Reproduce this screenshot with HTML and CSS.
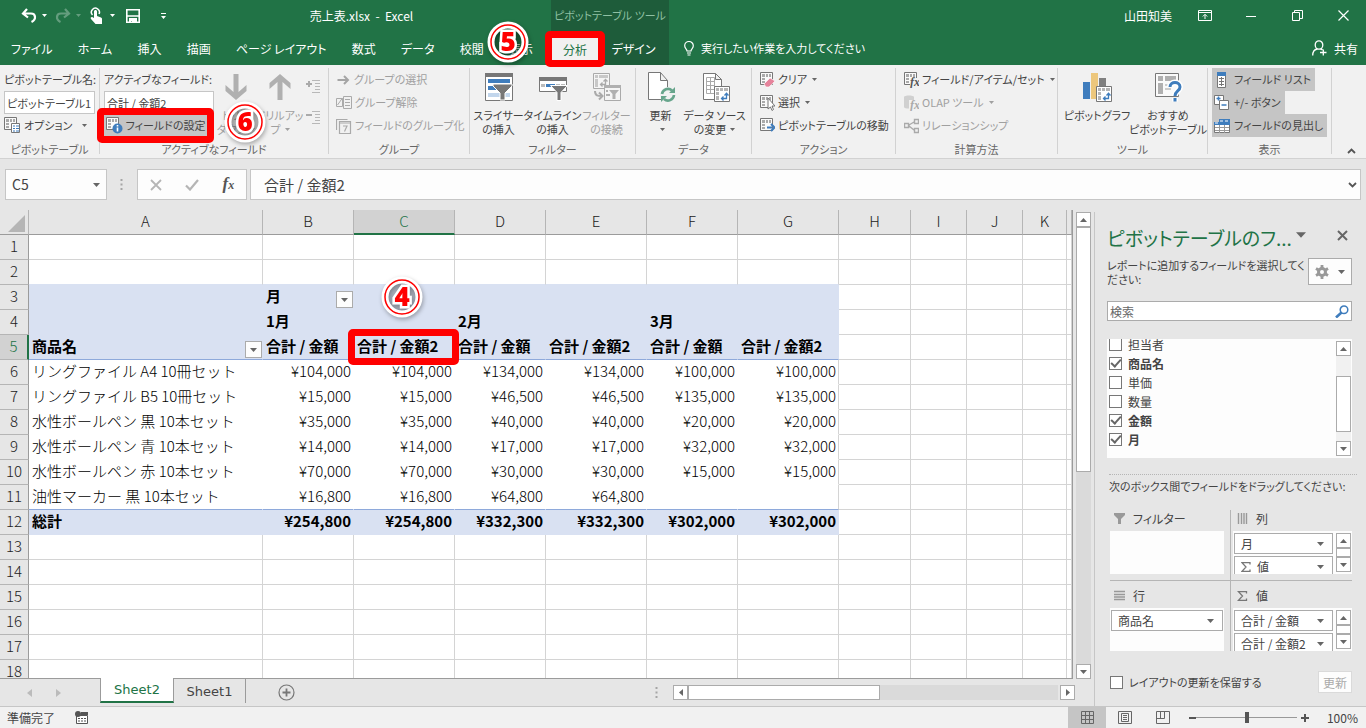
FILE: index.html
```html
<!DOCTYPE html>
<html lang="ja">
<head>
    <meta charset="UTF-8">
    <meta name="viewport" content="width=device-width, initial-scale=1.0">
    <title>売上表.xlsx - Excel</title>
    <link rel="stylesheet" href="styles.css">
</head>
<body>
    <!-- Shared icon shapes -->
    <svg class="defs" width="0" height="0" aria-hidden="true">
        <symbol id="pivot" viewBox="0 0 16 16">
            <path d="M.5 .5h12v12H.5z" fill="#fafafa" stroke="#777"/>
            <path d="M2 2h3v3H2zM6 2h2v3H6zM9 2h2v3H9zM2 6h3v2H2zM2 9h3v2H2z" fill="#aaa"/>
        </symbol>
        <symbol id="minipivot" viewBox="0 0 16 16">
            <path d="M.5 .5h15v15H.5z" fill="#fff" stroke="#777"/>
            <path d="M2 2h3v3H2zM6 2h3v3H6zM10 2h4v3h-4zM2 6h3v3H2zM2 10h3v4H2z" fill="#b5b5b5"/>
            <path d="M8 12.500h4.500V7.500M10.500 9.500l2-2.200 2 2.200M9.500 10.500L7.500 12.500l2 2" fill="none" stroke="#3f7dbd" stroke-width="1.300"/>
        </symbol>
        <symbol id="caret" viewBox="0 0 7 4"><path d="M0 0h7L3.500 4z" fill="currentColor"/></symbol>
        <symbol id="sigma" viewBox="0 0 10 10"><path d="M9 2.500V.7H1L5 5 1 9.300h8V7.500" fill="none" stroke="#777" stroke-width="1.300"/></symbol>
    </svg>

    <header class="titlebar">
        <div class="quick-access">
            <button class="qat" aria-label="元に戻す"><svg width="16" height="16" viewBox="0 0 16 16"><path d="M6 1L2 5.500l5 4M2.500 5.500H10c5 0 5.500 6 .5 8.500" fill="none" stroke="#fff" stroke-width="2.200"/></svg><svg class="caret" width="5" height="3"><use href="#caret"/></svg></button>
            <button class="qat faded" aria-label="やり直し"><svg width="16" height="16" viewBox="0 0 16 16"><path d="M10 1l4 4.500-5 4M13.500 5.500H6c-5 0-5.500 6-.5 8.500" fill="none" stroke="#fff" stroke-width="2.200"/></svg><svg class="caret" width="5" height="3"><use href="#caret"/></svg></button>
            <button class="qat" aria-label="タッチ/マウス モード"><svg width="16" height="17" viewBox="0 0 16 17"><path d="M3.500 8A4 4 0 1 1 10 7" fill="none" stroke="#fff" stroke-width="1.500"/><path d="M5 4.500c0-2 3-2 3 0V9l4 1.500c1 .5 1 1 1 2V17H6.500L2 12c-1-1.500.5-2.500 2-1.500L5 11z" fill="#fff"/></svg><svg class="caret" width="5" height="3"><use href="#caret"/></svg></button>
            <button class="qat save" aria-label="上書き保存"><svg width="14" height="14" viewBox="0 0 14 14"><path d="M.8 .8h12.400v12.400H.8zM1 7h12" fill="none" stroke="#fff" stroke-width="1.600"/><path d="M3 9h8v5H6v-2H5v2H3z" fill="#fff"/></svg></button>
            <button class="qat more" aria-label="ユーザー設定"><svg width="5" height="6" viewBox="0 0 5 6"><path d="M0 0h5v1H0zM0 3h5L2.500 6z" fill="#fff"/></svg></button>
        </div>
        <div class="doc-title">売上表.xlsx&nbsp; - &nbsp;Excel</div>
        <div class="context-title">ピボットテーブル ツール</div>
        <div class="user">山田知美</div>
        <div class="window-buttons">
            <button aria-label="リボンの表示オプション"><svg width="14" height="12" viewBox="0 0 14 12"><path d="M.5 .5h13v10H.5zM1 2.500h12M7 9V4.500M4.800 6.500L7 4.300l2.200 2.200" fill="none" stroke="#fff"/></svg></button>
            <button aria-label="最小化"><svg width="10" height="10" viewBox="0 0 10 10"><path d="M0 5.500h10" stroke="#fff"/></svg></button>
            <button aria-label="元に戻す (縮小)"><svg width="11" height="11" viewBox="0 0 11 11"><path d="M.5 2.500h7v8h-7zM2.500 2.500v-2h8v8h-3" fill="none" stroke="#fff"/></svg></button>
            <button aria-label="閉じる"><svg width="11" height="11" viewBox="0 0 11 11"><path d="M.5 .5l10 10M10.500 .5l-10 10" stroke="#fff" stroke-width="1.200"/></svg></button>
        </div>
    </header>

    <nav class="tabs">
        <div class="main-tabs">
            <button>ファイル</button>
            <button>ホーム</button>
            <button>挿入</button>
            <button>描画</button>
            <button>ページ レイアウト</button>
            <button>数式</button>
            <button>データ</button>
            <button>校閲</button>
            <button>表示</button>
        </div>
        <div class="context-tabs">
            <div class="marked">
                <button class="active-tab">分析</button>
                <svg class="badge badge-tab" width="44" height="44" viewBox="0 0 44 44"><use href="#ring"/><text class="badge-number" x="22" y="31">5</text></svg>
            </div>
            <button class="design-tab">デザイン</button>
        </div>
        <button class="tell-me"><svg width="10" height="15" viewBox="0 0 10 15"><path d="M3 10C3 8 .7 7.500 .7 4.800a4.300 4.300 0 0 1 8.600 0C9.300 7.500 7 8 7 10zM3 12h4M3.500 14h3" fill="none" stroke="#fff" stroke-width="1.200"/></svg>実行したい作業を入力してください</button>
        <button class="share"><svg width="15" height="16" viewBox="0 0 15 16"><path d="M7 .8a3.800 4.200 0 1 1 0 8.400 3.800 4.200 0 0 1 0-8.400zM.7 15.500c0-4 2-6 4.500-6.500M8.500 9c1 .2 1.500 .5 2 1M8 12.500h6.500M11.300 9.500v6" fill="none" stroke="#fff" stroke-width="1.300"/></svg>共有</button>
    </nav>

    <section class="ribbon">
        <div class="group group-name">
            <div class="group-body stack">
                <label class="row" for="pivotName">ピボットテーブル名:</label>
                <input class="ribbon-input" type="text" id="pivotName" value="ピボットテーブル1">
                <button class="row"><svg width="17" height="17" viewBox="0 0 17 17"><use href="#pivot" width="16" height="16"/><path d="M7.500 6.500h8v9h-8z" fill="#fff" stroke="#777"/><path d="M9 9h2M12 9h3M9 11.500h2M12 11.500h3M9 14h2M12 14h3" stroke="#3f7dbd"/></svg>オプション<svg class="caret push" width="5" height="3"><use href="#caret"/></svg></button>
            </div>
            <div class="group-label">ピボットテーブル</div>
        </div>

        <div class="group group-field">
            <div class="group-body">
                <div class="stack field-stack">
                    <label class="row" for="activeField">アクティブなフィールド:</label>
                    <input class="ribbon-input" type="text" id="activeField" value="合計 / 金額2">
                    <div class="marked">
                        <button class="row settings"><svg width="17" height="17" viewBox="0 0 17 17"><use href="#pivot" width="16" height="16"/><circle cx="11.500" cy="11.500" r="5" fill="#3f7dbd"/><path d="M11.500 8v1.600M11.500 10.500v4" stroke="#fff" stroke-width="1.600"/></svg>フィールドの設定</button>
                        <svg class="badge badge-settings" width="44" height="44" viewBox="0 0 44 44"><use href="#ring"/><text class="badge-number" x="22" y="31">6</text></svg>
                    </div>
                </div>
                <button class="big drill disabled"><svg width="22" height="30" viewBox="0 0 22 30"><path d="M8.500 2h5v18l8-7v6L11 28 .5 19v-6l8 7z" fill="#b0b0b0"/></svg><span>ドリル<br>ダウン<svg class="caret" width="5" height="3"><use href="#caret"/></svg></span></button>
                <button class="big drill disabled"><svg width="22" height="30" viewBox="0 0 22 30"><path d="M8.500 28h5V10l8 7v-6L11 2 .5 11v6l8-7z" fill="#b0b0b0"/></svg><span>ドリルアッ<br>プ<svg class="caret" width="5" height="3"><use href="#caret"/></svg></span></button>
                <div class="expand">
                    <button aria-label="フィールドの展開"><svg width="15" height="15" viewBox="0 0 15 15"><path d="M0 5h6M3 2v6" stroke="#aaa" stroke-width="2"/><path d="M6 1.500h8M9 4.500h5M9 7.500h5M9 10.500h5M6 13.500h8" stroke="#b8b8b8"/></svg></button>
                    <button aria-label="フィールドの折りたたみ"><svg width="15" height="15" viewBox="0 0 15 15"><path d="M0 5h6" stroke="#aaa" stroke-width="2"/><path d="M6 1.500h8M9 4.500h5M9 7.500h5M9 10.500h5M6 13.500h8" stroke="#b8b8b8"/></svg></button>
                </div>
            </div>
            <div class="group-label">アクティブなフィールド</div>
        </div>

        <div class="group group-grouping">
            <div class="group-body stack disabled">
                <button class="row"><svg width="15" height="16" viewBox="0 0 15 16"><path d="M1.500 8h10M8 4l4 4-4 4" fill="none" stroke="#a5a5a5" stroke-width="2"/></svg>グループの選択</button>
                <button class="row"><svg width="16" height="16" viewBox="0 0 16 16"><path d="M.5 3.500h6v8h-6zM7.500 1.500h8v12h-8zM1.500 10l5-7M9 4.500h5M9 7.500h5M9 10.500h5" fill="none" stroke="#aaa"/></svg>グループ解除</button>
                <button class="row"><svg width="16" height="16" viewBox="0 0 16 16"><path d="M.5 12V1.500h11M3.500 3.500h11v12h-11zM3.500 5h11M7 8h4l-2.500 5.500" fill="none" stroke="#aaa" stroke-width="1.200"/></svg>フィールドのグループ化</button>
            </div>
            <div class="group-label">グループ</div>
        </div>

        <div class="group group-filter">
            <div class="group-body centered">
                <button class="big"><svg width="30" height="30" viewBox="0 0 30 30"><path d="M1.500 1.500h27v27h-27z" fill="#fff" stroke="#777"/><path d="M1 1h28v4H1z" fill="#777"/><path d="M4 7h22v4H4zM4 14h9v4H4z" fill="#3f7dbd"/><path d="M4 21h22v4H4z" fill="#c2d6ec"/><path d="M9 12h19v2l-7 7v7h-5v-7l-7-7z" fill="#777" stroke="#fff"/></svg><span>スライサー<br>の挿入</span></button>
                <button class="big"><svg width="30" height="30" viewBox="0 0 30 30"><path d="M1.500 5.500h27v14h-27z" fill="#fff" stroke="#777"/><path d="M1 5h28v4H1z" fill="#777"/><path d="M3 12h4v3H3zM18 12h4v3h-4zM23 12h4v3h-4z" fill="#bbb"/><path d="M8 12h9v3H8z" fill="#3f7dbd"/><path d="M12.500 13.500h17l-6.500 7v8h-4v-8z" fill="#777" stroke="#fff"/></svg><span>タイムライン<br>の挿入</span></button>
                <button class="big disabled"><svg width="30" height="30" viewBox="0 0 30 30"><path d="M1.500 1.500h16v15h-16z" fill="#f5f5f5" stroke="#aaa"/><path d="M3 3h3v3H3zM7 3h9v3H7zM3 7h3v8H3z" fill="#c8c8c8"/><path d="M9 12.500h4.500V8M11.500 9.500l2-2 2 2M10.500 10.500l-2 2 2 2" fill="none" stroke="#aaa" stroke-width="1.300"/><path d="M3 19c0 5 3 5 7 5M7 20.500l3.500 3.500L7 27.500" fill="none" stroke="#aaa" stroke-width="2"/><path d="M12.500 13.500h16v15h-16z" fill="#f5f5f5" stroke="#aaa"/><path d="M12 13h17v3H12zM17 18h10l-3.500 4v5h-3v-5zM14 18h2v2h-2zM14 22h4v2h-4z" fill="#b0b0b0"/></svg><span>フィルター<br>の接続</span></button>
            </div>
            <div class="group-label">フィルター</div>
        </div>

        <div class="group group-data">
            <div class="group-body centered">
                <button class="big"><svg width="30" height="30" viewBox="0 0 30 30"><path d="M2.500 .5h12l7 8v19h-19zM14.500 .5v8h7" fill="#fff" stroke="#777"/><circle cx="22" cy="23" r="8" fill="#f1f1f1"/><path d="M16 22a6 6 0 0 1 10-3.500M28 23a6 6 0 0 1-10 4" fill="none" stroke="#67a58c" stroke-width="2.600"/><path d="M29 15v6h-6zM15 30v-6h6z" fill="#67a58c"/></svg><span>更新<br><svg class="caret" width="5" height="3"><use href="#caret"/></svg></span></button>
                <button class="big"><svg width="30" height="30" viewBox="0 0 30 30"><path d="M3.500 1.500h12l6 6v20h-18zM15.500 1.500v6h6" fill="#fff" stroke="#777"/><path d="M6.500 5.500h8v16h-8zM6.500 9.500h8M6.500 13.500h8M6.500 17.500h8M10.500 5.500v16" fill="none" stroke="#aaa"/><use href="#minipivot" x="14" y="14" width="16" height="16"/></svg><span>データ ソース<br>の変更<svg class="caret" width="5" height="3"><use href="#caret"/></svg></span></button>
            </div>
            <div class="group-label">データ</div>
        </div>

        <div class="group group-action">
            <div class="group-body stack">
                <button class="row"><svg width="15" height="16" viewBox="0 0 15 16"><use href="#pivot" width="16" height="16"/><path d="M4 12l6-6 5 3-6 6H6z" fill="#e5839b" stroke="#fff" stroke-width=".6"/></svg>クリア<svg class="caret" width="5" height="3"><use href="#caret"/></svg></button>
                <button class="row"><svg width="15" height="16" viewBox="0 0 15 16"><use href="#pivot" width="16" height="16"/><path d="M8 3v11l2.500-2 1.500 3.500 1.500-1L12 11h3z" fill="#fff" stroke="#777"/></svg>選択<svg class="caret" width="5" height="3"><use href="#caret"/></svg></button>
                <button class="row"><svg width="15" height="16" viewBox="0 0 15 16"><use href="#pivot" width="16" height="16"/><path d="M7 9.500h5M11 6l3.500 3.500L11 13" fill="none" stroke="#3f7dbd" stroke-width="2"/></svg>ピボットテーブルの移動</button>
            </div>
            <div class="group-label">アクション</div>
        </div>

        <div class="group group-calc">
            <div class="group-body stack">
                <button class="row"><svg width="15" height="16" viewBox="0 0 15 16"><use href="#pivot" width="16" height="16"/><path d="M6 6h9v10H6z" fill="#f1f1f1"/><text class="fx-small" x="6" y="14">fx</text></svg>フィールド/アイテム/セット<svg class="caret" width="5" height="3"><use href="#caret"/></svg></button>
                <button class="row disabled"><svg width="15" height="16" viewBox="0 0 15 16"><path d="M0 2c0-2 10-2 10 0v10c0 2-10 2-10 0z" fill="#d0d0d0"/><path d="M5 5h10v11H5z" fill="#f1f1f1"/><text class="fx-small faint" x="6" y="14">fx</text></svg>OLAP ツール<svg class="caret" width="5" height="3"><use href="#caret"/></svg></button>
                <button class="row disabled"><svg width="15" height="16" viewBox="0 0 15 16"><path d="M.5 5.500h4v4h-4zM10.500 1.500h4v4h-4zM10.500 10.500h4v4h-4zM5 7l5-3M5 8l5 4" fill="none" stroke="#aaa" stroke-width="1.400"/></svg>リレーションシップ</button>
            </div>
            <div class="group-label">計算方法</div>
        </div>

        <div class="group group-tools">
            <div class="group-body centered">
                <button class="big"><svg width="30" height="30" viewBox="0 0 30 30"><path d="M1 10h7v17H1z" fill="#3f7dbd"/><path d="M9 1h7v26H9z" fill="#edc77c"/><path d="M17 6h7v10h-7z" fill="#808080"/><use href="#minipivot" x="14" y="14" width="16" height="16"/></svg><span>ピボットグラフ</span></button>
                <button class="big"><svg width="30" height="30" viewBox="0 0 30 30"><path d="M2.500 1.500h23v23h-23z" fill="#fafafa" stroke="#777"/><path d="M5 4h5v5H5zM12 4h11v5H12zM5 11h5v11H5z" fill="#b0b0b0"/><path d="M12 12h6v2h-6zM12 16h6v2h-6z" fill="#ccc"/><path d="M17 15c0-6 10-6 10 0 0 4-5 4-5 9M22 26v3.500" fill="none" stroke="#fff" stroke-width="6"/><path d="M17 15c0-6 10-6 10 0 0 4-5 4-5 9M22 26v3.500" fill="none" stroke="#3f7dbd" stroke-width="3"/></svg><span>おすすめ<br>ピボットテーブル</span></button>
            </div>
            <div class="group-label">ツール</div>
        </div>

        <div class="group group-show">
            <div class="group-body stack">
                <button class="row pressed"><svg width="16" height="16" viewBox="0 0 16 16"><path d="M3.500 .5h8v15h-8z" fill="#fff" stroke="#777"/><path d="M3 0h9v4H3z" fill="#3f7dbd"/><path d="M5 6.500h5M5 9.500h5M5 12.500h5M7.500 5v9" stroke="#777"/></svg>フィールド リスト</button>
                <button class="row pressed"><svg width="16" height="16" viewBox="0 0 16 16"><path d="M.5 .5h9v9h-9z" fill="#fff" stroke="#777"/><path d="M5.500 5.500h9v9h-9z" fill="#fff" stroke="#777"/><path d="M2.500 3.500h4M4.500 1.500v4M7.500 10h5" stroke="#3f7dbd" stroke-width="1.500"/></svg>+/- ボタン</button>
                <button class="row pressed"><svg width="16" height="16" viewBox="0 0 16 16"><path d="M.5 5.500h15v9H.5z" fill="#fff" stroke="#777"/><path d="M5 1h11v4H5zM0 4h16v3H0z" fill="#3f7dbd"/><path d="M1 9.500h14M1 12.500h14M5.500 7v8M10.500 7v8" stroke="#999"/><path d="M1 5h3M6 3h3M11 3h3" stroke="#fff"/></svg>フィールドの見出し</button>
            </div>
            <div class="group-label">表示</div>
        </div>
        <button class="collapse" aria-label="リボンを折りたたむ"><svg width="9" height="6" viewBox="0 0 9 6"><path d="M1 5l3.500-3.500L8 5" fill="none" stroke="#555" stroke-width="1.800"/></svg></button>
    </section>

    <section class="formula-bar">
        <div class="name-box">
            <input type="text" value="C5" aria-label="名前ボックス">
            <svg class="caret" width="7" height="4"><use href="#caret"/></svg>
        </div>
        <svg class="grip" width="3" height="12" viewBox="0 0 3 12"><path d="M1.500 0v12" stroke="#a5a5a5" stroke-width="2" stroke-dasharray="2 2.500"/></svg>
        <div class="formula-buttons">
            <button aria-label="キャンセル"><svg width="12" height="12" viewBox="0 0 12 12"><path d="M1 1l10 10M11 1L1 11" stroke="#b5b5b5" stroke-width="1.800"/></svg></button>
            <button aria-label="入力"><svg width="14" height="12" viewBox="0 0 14 12"><path d="M1 6.500l4 4L13 1" fill="none" stroke="#b5b5b5" stroke-width="2.200"/></svg></button>
            <button class="fx" aria-label="関数の挿入">f<small>x</small></button>
        </div>
        <div class="formula">
            <input type="text" value="合計 / 金額2" aria-label="数式バー">
            <svg width="9" height="6" viewBox="0 0 9 6"><path d="M1 1l3.500 3.500L8 1" fill="none" stroke="#555" stroke-width="1.800"/></svg>
        </div>
    </section>

    <main class="workspace">
        <div class="book">
            <div class="sheet-area">
                <div class="sheet">
                    <table>
                        <colgroup>
                            <col class="c-head"><col class="c-a"><col class="c-s"><col class="c-w"><col class="c-s"><col class="c-w"><col class="c-s"><col class="c-w"><col class="c-h"><col class="c-i"><col class="c-i"><col class="c-k"><col>
                        </colgroup>
                        <thead>
                            <tr><th class="corner"><svg width="17" height="17" viewBox="0 0 17 17"><path d="M17 0v17H0z" fill="#b5b5b5"/></svg></th><th>A</th><th>B</th><th class="selected">C</th><th>D</th><th>E</th><th>F</th><th>G</th><th>H</th><th>I</th><th>J</th><th>K</th><th></th></tr>
                        </thead>
                        <tbody>
                            <tr><th>1</th><td></td><td></td><td></td><td></td><td></td><td></td><td></td><td></td><td></td><td></td><td></td><td></td></tr>
                            <tr class="above"><th>2</th><td></td><td></td><td></td><td></td><td></td><td></td><td></td><td></td><td></td><td></td><td></td><td></td></tr>
                            <tr class="band"><th>3</th><td></td><td>月<button class="filter" aria-label="月のフィルター"><svg class="caret" width="7" height="4"><use href="#caret"/></svg></button></td><td></td><td></td><td></td><td></td><td></td><td></td><td></td><td></td><td></td><td></td></tr>
                            <tr class="band"><th>4</th><td></td><td>1月</td><td></td><td>2月</td><td></td><td>3月</td><td></td><td></td><td></td><td></td><td></td><td></td></tr>
                            <tr class="band ruled"><th class="selected">5</th><td>商品名<button class="filter" aria-label="商品名のフィルター"><svg class="caret" width="7" height="4"><use href="#caret"/></svg></button></td><td>合計 / 金額</td><td class="marked">合計 / 金額2<svg class="badge badge-cell" width="44" height="44" viewBox="0 0 44 44"><use href="#ring"/><text class="badge-number" x="22" y="31">4</text></svg></td><td>合計 / 金額</td><td>合計 / 金額2</td><td>合計 / 金額</td><td>合計 / 金額2</td><td></td><td></td><td></td><td></td><td></td></tr>
                            <tr class="item"><th>6</th><td>リングファイル A4 10冊セット</td><td>¥104,000</td><td>¥104,000</td><td>¥134,000</td><td>¥134,000</td><td>¥100,000</td><td>¥100,000</td><td></td><td></td><td></td><td></td><td></td></tr>
                            <tr class="item"><th>7</th><td>リングファイル B5 10冊セット</td><td>¥15,000</td><td>¥15,000</td><td>¥46,500</td><td>¥46,500</td><td>¥135,000</td><td>¥135,000</td><td></td><td></td><td></td><td></td><td></td></tr>
                            <tr class="item"><th>8</th><td>水性ボールペン 黒 10本セット</td><td>¥35,000</td><td>¥35,000</td><td>¥40,000</td><td>¥40,000</td><td>¥20,000</td><td>¥20,000</td><td></td><td></td><td></td><td></td><td></td></tr>
                            <tr class="item"><th>9</th><td>水性ボールペン 青 10本セット</td><td>¥14,000</td><td>¥14,000</td><td>¥17,000</td><td>¥17,000</td><td>¥32,000</td><td>¥32,000</td><td></td><td></td><td></td><td></td><td></td></tr>
                            <tr class="item"><th>10</th><td>水性ボールペン 赤 10本セット</td><td>¥70,000</td><td>¥70,000</td><td>¥30,000</td><td>¥30,000</td><td>¥15,000</td><td>¥15,000</td><td></td><td></td><td></td><td></td><td></td></tr>
                            <tr class="item ruled"><th>11</th><td>油性マーカー 黒 10本セット</td><td>¥16,800</td><td>¥16,800</td><td>¥64,800</td><td>¥64,800</td><td></td><td></td><td></td><td></td><td></td><td></td><td></td></tr>
                            <tr class="band total"><th>12</th><td>総計</td><td>¥254,800</td><td>¥254,800</td><td>¥332,300</td><td>¥332,300</td><td>¥302,000</td><td>¥302,000</td><td></td><td></td><td></td><td></td><td></td></tr>
                            <tr><th>13</th><td></td><td></td><td></td><td></td><td></td><td></td><td></td><td></td><td></td><td></td><td></td><td></td></tr>
                            <tr><th>14</th><td></td><td></td><td></td><td></td><td></td><td></td><td></td><td></td><td></td><td></td><td></td><td></td></tr>
                            <tr><th>15</th><td></td><td></td><td></td><td></td><td></td><td></td><td></td><td></td><td></td><td></td><td></td><td></td></tr>
                            <tr><th>16</th><td></td><td></td><td></td><td></td><td></td><td></td><td></td><td></td><td></td><td></td><td></td><td></td></tr>
                            <tr><th>17</th><td></td><td></td><td></td><td></td><td></td><td></td><td></td><td></td><td></td><td></td><td></td><td></td></tr>
                            <tr><th>18</th><td></td><td></td><td></td><td></td><td></td><td></td><td></td><td></td><td></td><td></td><td></td><td></td></tr>
                        </tbody>
                    </table>
                </div>
                <div class="vscroll">
                    <button class="up" aria-label="上へ"><svg class="caret" width="7" height="4"><use href="#caret"/></svg></button>
                    <div class="track"><div class="thumb"></div></div>
                    <button aria-label="下へ"><svg class="caret" width="7" height="4"><use href="#caret"/></svg></button>
                </div>
            </div>
            <div class="sheet-tabs">
                <div class="tab-arrows">
                    <svg width="5" height="8" viewBox="0 0 5 8"><path d="M5 0v8L0 4z" fill="#bbb"/></svg>
                    <svg width="5" height="8" viewBox="0 0 5 8"><path d="M0 0v8l5-4z" fill="#bbb"/></svg>
                </div>
                <button class="sheet-tab current">Sheet2</button>
                <button class="sheet-tab">Sheet1</button>
                <button class="add-sheet" aria-label="新しいシート"><svg width="17" height="17" viewBox="0 0 17 17"><circle cx="8.500" cy="8.500" r="7.500" fill="none" stroke="#777" stroke-width="1.200"/><path d="M8.500 4.500v8M4.500 8.500h8" stroke="#777" stroke-width="1.800"/></svg></button>
                <svg class="grip" width="3" height="11" viewBox="0 0 3 11"><path d="M1.500 0v11" stroke="#a5a5a5" stroke-width="2" stroke-dasharray="2 2.500"/></svg>
                <div class="hscroll">
                    <button aria-label="左へ"><svg width="4" height="7" viewBox="0 0 4 7"><path d="M4 0v7L0 3.500z" fill="#666"/></svg></button>
                    <div class="track"><div class="thumb"></div></div>
                    <button aria-label="右へ"><svg width="4" height="7" viewBox="0 0 4 7"><path d="M0 0v7l4-3.500z" fill="#666"/></svg></button>
                </div>
            </div>
        </div>

        <aside class="pane">
            <div class="pane-head">
                <h2>ピボットテーブルのフ...</h2>
                <svg class="caret" width="10" height="6"><use href="#caret"/></svg>
                <button class="pane-close" aria-label="閉じる"><svg width="11" height="11" viewBox="0 0 11 11"><path d="M1 1l9 9M10 1l-9 9" stroke="#666" stroke-width="2"/></svg></button>
            </div>
            <div class="pane-intro">
                <p>レポートに追加するフィールドを選択してく<br>ださい:</p>
                <button class="gear" aria-label="ツール"><svg width="14" height="14" viewBox="0 0 14 14"><circle cx="7" cy="7" r="3.500" fill="none" stroke="#999" stroke-width="3"/><path d="M7 0v3M7 11v3M1 3.500l2.500 1.500M10.500 9l2.500 1.500M1 10.500L3.500 9M10.500 5L13 3.500" stroke="#999" stroke-width="2.800"/></svg><svg class="caret" width="7" height="4"><use href="#caret"/></svg></button>
            </div>
            <div class="search">
                <input type="text" placeholder="検索" aria-label="検索">
                <svg width="14" height="13" viewBox="0 0 14 13"><circle cx="9" cy="4.800" r="3.800" fill="none" stroke="#3f7dbd" stroke-width="1.500"/><path d="M6.500 7.500L1 12.500" stroke="#3f7dbd" stroke-width="2.600"/></svg>
            </div>
            <div class="field-list">
                <div class="fields">
                    <label><input type="checkbox">担当者</label>
                    <label class="on"><input type="checkbox" checked>商品名</label>
                    <label><input type="checkbox">単価</label>
                    <label><input type="checkbox">数量</label>
                    <label class="on"><input type="checkbox" checked>金額</label>
                    <label class="on"><input type="checkbox" checked>月</label>
                </div>
                <div class="vscroll list-scroll">
                    <button class="up" aria-label="上へ"><svg class="caret" width="7" height="4"><use href="#caret"/></svg></button>
                    <div class="track"><div class="thumb"></div></div>
                    <button aria-label="下へ"><svg class="caret" width="7" height="4"><use href="#caret"/></svg></button>
                </div>
            </div>
            <p class="drag-hint">次のボックス間でフィールドをドラッグしてください:</p>
            <div class="areas">
                <div class="area">
                    <h3><svg width="11" height="11" viewBox="0 0 11 11"><path d="M0 0h11v2L7 6v5H4V6L0 2z" fill="#999"/></svg>フィルター</h3>
                    <div class="drop"></div>
                </div>
                <div class="area">
                    <h3><svg width="11" height="11" viewBox="0 0 11 11"><path d="M1.500 0v11M4.500 0v11M7 0v11M9.500 0v11" stroke="#999" stroke-width="1.400"/></svg>列</h3>
                    <div class="drop">
                        <div class="pills">
                            <button class="pill">月<svg class="caret" width="7" height="4"><use href="#caret"/></svg></button>
                            <button class="pill"><svg width="10" height="10"><use href="#sigma"/></svg>値<svg class="caret" width="7" height="4"><use href="#caret"/></svg></button>
                        </div>
                        <div class="vscroll drop-scroll">
                            <button class="up" aria-label="上へ"><svg class="caret" width="7" height="4"><use href="#caret"/></svg></button>
                            <div class="track"><div class="thumb"></div></div>
                            <button aria-label="下へ"><svg class="caret" width="7" height="4"><use href="#caret"/></svg></button>
                        </div>
                    </div>
                </div>
                <div class="area">
                    <h3><svg width="11" height="11" viewBox="0 0 11 11"><path d="M0 1.500h11M0 4.500h11M0 7h11M0 9.500h11" stroke="#999" stroke-width="1.400"/></svg>行</h3>
                    <div class="drop">
                        <div class="pills">
                            <button class="pill">商品名<svg class="caret" width="7" height="4"><use href="#caret"/></svg></button>
                        </div>
                    </div>
                </div>
                <div class="area">
                    <h3><svg width="11" height="10"><use href="#sigma"/></svg>値</h3>
                    <div class="drop">
                        <div class="pills">
                            <button class="pill">合計 / 金額<svg class="caret" width="7" height="4"><use href="#caret"/></svg></button>
                            <button class="pill">合計 / 金額2<svg class="caret" width="7" height="4"><use href="#caret"/></svg></button>
                        </div>
                        <div class="vscroll drop-scroll">
                            <button class="up" aria-label="上へ"><svg class="caret" width="7" height="4"><use href="#caret"/></svg></button>
                            <div class="track"><div class="thumb"></div></div>
                            <button aria-label="下へ"><svg class="caret" width="7" height="4"><use href="#caret"/></svg></button>
                        </div>
                    </div>
                </div>
            </div>
            <div class="pane-foot">
                <label><input type="checkbox">レイアウトの更新を保留する</label>
                <button class="update" disabled>更新</button>
            </div>
        </aside>
    </main>

    <footer class="status">
        <span>準備完了</span>
        <button class="macro" aria-label="マクロの記録"><svg width="14" height="14" viewBox="0 0 14 14"><path d="M1.500 4.500h11v8h-11z" fill="#fff" stroke="#555"/><path d="M6 1h7v3H6z" fill="#555"/><circle cx="3" cy="3" r="3" fill="#555"/><path d="M3 7.500h8M3 10h8" stroke="#555" stroke-dasharray="2 1"/></svg></button>
        <div class="views">
            <button class="view pressed" aria-label="標準"><svg width="13" height="13" viewBox="0 0 13 13"><path d="M.5 .5h12v12H.5zM.5 4.500h12M.5 8.500h12M4.500 .5v12M8.500 .5v12" fill="none" stroke="#666"/></svg></button>
            <button class="view" aria-label="ページ レイアウト"><svg width="14" height="13" viewBox="0 0 14 13"><path d="M.5 .5h13v12H.5zM3.500 2.500h7v8h-7zM5 4.500h4M5 6.500h4M5 8.500h4" fill="none" stroke="#666"/></svg></button>
            <button class="view" aria-label="改ページ プレビュー"><svg width="14" height="13" viewBox="0 0 14 13"><path d="M.5 .5h13v12H.5zM4.500 .5v7M8.500 .5v7M.5 7.500h8" fill="none" stroke="#666"/></svg></button>
        </div>
        <div class="zoom">
            <button aria-label="縮小"><svg width="7" height="8" viewBox="0 0 7 8"><path d="M0 4h7" stroke="#555" stroke-width="2"/></svg></button>
            <input type="range" min="0" max="200" value="100" aria-label="ズーム">
            <button aria-label="拡大"><svg width="8" height="8" viewBox="0 0 8 8"><path d="M0 4h8M4 0v8" stroke="#555" stroke-width="2"/></svg></button>
            <span>100%</span>
        </div>
    </footer>

    <!-- Ring behind the step numbers -->
    <svg class="defs" width="0" height="0" aria-hidden="true">
        <symbol id="ring" viewBox="0 0 44 44">
            <circle cx="22" cy="22" r="14" fill="#000" fill-opacity=".18"/>
            <circle cx="22" cy="22" r="17" fill="none" stroke="#fff" stroke-width="7"/>
            <circle cx="22" cy="22" r="17" fill="none" stroke="#f00" stroke-width="1.500"/>
        </symbol>
    </svg>
</body>
</html>
```

FILE: styles.css
```css
* {
    box-sizing: border-box;
}

body {
    margin: 0;
    height: 100vh;
    display: flex;
    flex-direction: column;
    overflow: hidden;
    font-family: "Noto Sans CJK JP", sans-serif;
    font-size: 12px;
    line-height: 15px;
    font-feature-settings: "palt";
    color: #444;
    background-color: #e6e6e6;
}

button, input {
    font: inherit;
    font-feature-settings: inherit;
    color: inherit;
    margin: 0;
    padding: 0;
    border: none;
    background: none;
}

button {
    display: flex;
    align-items: center;
    justify-content: center;
    white-space: nowrap;
}

h2, h3, p {
    margin: 0;
    font-weight: normal;
}

svg {
    flex: none;
}

.defs {
    position: absolute;
}

.caret {
    color: #666;
}

/* Title bar */
.titlebar {
    display: flex;
    align-items: center;
    flex: none;
    height: 31px;
    background-color: #217346;
    color: #fff;
}

.quick-access {
    display: flex;
    align-items: center;
    width: 172px;
    padding-left: 21px;
}

.qat {
    flex: none;
    width: 34px;
    gap: 5px;
    justify-content: flex-start;
}

.qat .caret {
    color: #fff;
}

.faded {
    opacity: 0.3;
}

.save {
    width: 38px;
    padding-left: 3px;
}

.more {
    width: 8px;
}

.doc-title {
    width: 379px;
    text-align: center;
    font-feature-settings: normal;
}

.context-title {
    width: 118px;
    font-size: 11px;
    line-height: 31px;
    text-align: center;
    white-space: nowrap;
    background-color: #1e5c3a;
    color: #8fc0a3;
}

.user {
    margin-left: auto;
    padding-right: 10px;
}

.window-buttons {
    display: flex;
}

.window-buttons button {
    width: 46px;
    height: 31px;
}

/* Tabs */
.tabs {
    display: flex;
    flex: none;
    height: 34px;
    background-color: #217346;
    color: #fff;
}

.main-tabs {
    display: flex;
    justify-content: space-between;
    width: 551px;
    padding: 0 18px 0 11px;
}

.context-tabs {
    display: flex;
    width: 118px;
    padding-left: 1px;
    background-color: #1e5c3a;
}

.marked {
    position: relative;
}

/* Red frame round the thing to click */
.marked::after {
    content: "";
    position: absolute;
    z-index: 2;
    inset: -7px;
    border: 7px solid #f00;
    border-radius: 5px;
    pointer-events: none;
}

.context-tabs .marked {
    width: 46px;
    height: 22px;
    margin-top: 7px;
}

.active-tab {
    width: 100%;
    height: 100%;
    background-color: #f1f1f1;
    color: #217346;
}

.design-tab {
    flex: 1;
}

.tell-me {
    gap: 7px;
    margin-left: 15px;
    font-size: 11px;
}

.share {
    gap: 7px;
    margin-left: auto;
    padding-right: 8px;
}

.badge {
    position: absolute;
    z-index: 3;
    filter: drop-shadow(1px 2px 2px rgba(0, 0, 0, 0.3));
}

.badge-number {
    font-family: "Open Sans", sans-serif;
    font-size: 26px;
    font-weight: 800;
    text-anchor: middle;
    fill: #f00;
    stroke: #fff;
    stroke-width: 5px;
    paint-order: stroke;
}

.badge-tab {
    left: -66px;
    top: -18px;
}

.badge-settings {
    right: -60px;
    top: -14px;
}

.badge-cell {
    left: 26px;
    top: -60px;
}

/* Ribbon */
.ribbon {
    display: flex;
    flex: none;
    height: 94px;
    padding-top: 3px;
    font-size: 11px;
    background-color: #f1f1f1;
    border-bottom: 1px solid #d2d2d2;
}

.group {
    display: flex;
    flex-direction: column;
    flex: none;
    border-right: 1px solid #d2d2d2;
    margin-bottom: 4px;
}

.group-body {
    display: flex;
    flex: none;
    height: 72px;
}

.group-label {
    line-height: 18px;
    text-align: center;
    color: #666;
}

.stack {
    display: flex;
    flex-direction: column;
    align-items: flex-start;
}

.centered {
    justify-content: center;
}

.row {
    display: flex;
    align-items: center;
    height: 23px;
    gap: 3px;
    white-space: nowrap;
}

.row .caret {
    margin-left: 2px;
}

.row .push {
    margin-left: 7px;
}

.ribbon-input {
    width: 100%;
    height: 23px;
    padding-left: 2px;
    background-color: #fff;
    border: 1px solid #c6c6c6;
}

.big {
    flex-direction: column;
    justify-content: flex-start;
    padding-top: 4px;
    gap: 6px;
    line-height: 14px;
}

.big span {
    text-align: center;
}

.big span .caret {
    margin-left: 4px;
    vertical-align: 3px;
}

.disabled, .disabled .caret {
    color: #a0a0a0;
}

.group-name {
    width: 100px;
}

.group-name .group-body {
    padding: 0 4px;
}

.group-field {
    width: 229px;
}

.group-field .group-body {
    padding-left: 4px;
}

.field-stack {
    flex: none;
    width: 110px;
    height: 72px;
}

.settings {
    width: 103px;
    height: 21px;
    margin-top: 1px;
    background-color: #c5c5c5;
}

.field-stack .marked::after {
    top: -6px;
}

.drill {
    width: 44px;
}

.expand {
    display: flex;
    flex-direction: column;
    gap: 16px;
    padding: 11px 0 0 4px;
}

.group-grouping {
    width: 141px;
}

.group-grouping .group-body {
    padding-left: 7px;
}

.group-filter {
    width: 166px;
}

.group-filter .big {
    width: 54px;
}

.group-data {
    width: 116px;
}

.group-data .big:first-child {
    width: 42px;
}

.group-data .big:last-child {
    width: 66px;
}

.group-action {
    width: 144px;
}

.group-action .group-body {
    padding-left: 8px;
}

.group-calc {
    width: 162px;
}

.group-calc .group-body {
    padding-left: 8px;
}

.fx-small {
    font-family: "Liberation Serif", serif;
    font-size: 12px;
    font-style: italic;
    font-weight: bold;
    fill: #555;
}

.faint {
    fill: #aaa;
}

.group-tools {
    width: 150px;
}

.group-tools .big {
    width: 71px;
}

.group-show {
    width: 124px;
}

.group-show .group-body {
    padding-left: 4px;
}

.pressed {
    background-color: #c5c5c5;
}

.group-show .row {
    gap: 4px;
    padding: 0 4px 0 2px;
}

.collapse {
    margin: auto 10px 4px auto;
}

/* Formula bar */
.formula-bar {
    display: flex;
    align-items: center;
    flex: none;
    height: 51px;
    padding: 0 5px;
}

.name-box, .formula-buttons, .formula {
    display: flex;
    align-items: center;
    height: 31px;
    background-color: #fdfdfd;
    border: 1px solid #c6c6c6;
}

.name-box {
    width: 102px;
    padding: 0 6px;
    font-size: 14px;
}

.name-box input {
    flex: 1;
    min-width: 0;
}

.formula-bar .grip {
    margin: 0 14px 0 13px;
}

.formula-buttons {
    width: 110px;
    justify-content: space-around;
    color: #555;
}

.fx {
    font-family: "Liberation Serif", serif;
    font-size: 17px;
    font-style: italic;
    font-weight: bold;
    align-items: baseline;
}

.fx small {
    font-size: 12px;
}

.formula {
    flex: 1;
    margin-left: 3px;
    padding: 0 3px 0 13px;
    font-size: 15px;
    font-feature-settings: normal;
}

.formula input {
    flex: 1;
}

/* Sheet */
.workspace {
    display: flex;
    flex: 1;
    min-height: 0;
}

.book {
    display: flex;
    flex-direction: column;
    flex: 1;
    min-width: 0;
}

.sheet-area {
    display: flex;
    flex: 1;
    min-height: 0;
}

.sheet {
    flex: 1;
    min-width: 0;
    overflow: hidden;
    border-right: 1px solid #9b9b9b;
    border-bottom: 1px solid #9b9b9b;
}

table {
    width: 100%;
    table-layout: fixed;
    border-collapse: separate;
    border-spacing: 0;
    font-size: 15px;
    font-weight: 300;
    line-height: 22px;
    font-feature-settings: normal;
    color: #000;
}

.c-head { width: 29px; }
.c-a { width: 234px; }
.c-s { width: 91px; }
.c-w { width: 101px; }
.c-h { width: 72px; }
.c-i { width: 56px; }
.c-k { width: 44px; }

th {
    height: 25px;
    padding: 0 0 2px;
    font-weight: inherit;
    color: #222;
    background-color: #e6e6e6;
    border-right: 1px solid #b5b5b5;
    border-bottom: 1px solid #9b9b9b;
}

tbody th {
    border-right-color: #9b9b9b;
    border-bottom-color: #b5b5b5;
}

th.selected {
    color: #217346;
    background-color: #d2d2d2;
}

thead .selected {
    padding-bottom: 1px;
    border-bottom: 2px solid #217346;
}

tbody .selected {
    border-right: 2px solid #217346;
}

.corner svg {
    display: block;
    margin: 4px 3px 0 auto;
}

td {
    position: relative;
    height: 25px;
    padding: 0 2px 2px 3px;
    white-space: nowrap;
    background-color: #fff;
    border-right: 1px solid #d4d4d4;
    border-bottom: 1px solid #d4d4d4;
}

.above td:nth-child(-n+8) {
    border-bottom-color: #d9e1f2;
}

.band td:nth-child(-n+8) {
    font-weight: bold;
    background-color: #d9e1f2;
    border-color: #d9e1f2;
}

.item td:nth-child(-n+8) {
    border-color: #fff;
}

.item td:nth-child(8) {
    border-right-color: #d4d4d4;
}

.band.ruled td:nth-child(-n+8), .item.ruled td:nth-child(-n+8) {
    border-bottom-color: #8ea9db;
}

.item td:nth-child(n+3), .total td:nth-child(n+3) {
    text-align: right;
}

td.marked::after {
    inset: -6px -5px -6px -6px;
}

.filter {
    position: absolute;
    right: 0;
    bottom: 1px;
    width: 17px;
    height: 17px;
    background-color: #fdfdfd;
    border: 1px solid #ababab;
}

/* Scrollbars */
.vscroll {
    display: flex;
    flex-direction: column;
    flex: none;
    width: 15px;
    margin: 2px 3px 0;
    background-color: #dadada;
}

.vscroll button, .hscroll button {
    flex: none;
    width: 15px;
    height: 15px;
    background-color: #fff;
    border: 1px solid #ababab;
}

.up .caret {
    transform: rotate(180deg);
}

.track {
    flex: 1;
    min-height: 0;
}

.thumb {
    background-color: #fff;
    border: 1px solid #ababab;
}

.vscroll .thumb {
    height: 56%;
}

.sheet-tabs {
    display: flex;
    align-items: center;
    flex: none;
    height: 27px;
}

.tab-arrows {
    display: flex;
    gap: 24px;
    width: 100px;
    padding-left: 27px;
}

.sheet-tab {
    align-self: flex-start;
    width: 72px;
    height: 24px;
    font-family: "DejaVu Sans", sans-serif;
    font-size: 13px;
    border-right: 1px solid #9b9b9b;
}

.current {
    width: 74px;
    margin-top: -1px;
    height: 25px;
    color: #217346;
    background-color: #fff;
    border-left: 1px solid #9b9b9b;
    border-bottom: 2px solid #217346;
}

.add-sheet {
    margin-left: 32px;
}

.sheet-tabs .grip {
    margin-left: auto;
    margin-right: 15px;
}

.hscroll {
    display: flex;
    width: 402px;
    height: 15px;
    margin-right: 19px;
}

.hscroll .track {
    margin-right: 2px;
    background-color: #dadada;
}

.hscroll .thumb {
    width: 52%;
    height: 15px;
}

/* Field pane */
.pane {
    display: flex;
    flex-direction: column;
    flex: none;
    width: 272px;
    margin-top: 2px;
    padding: 10px 14px 0 12px;
    border-left: 1px solid #c6c6c6;
}

.pane-head {
    display: flex;
    align-items: center;
    height: 32px;
    padding-bottom: 6px;
}

.pane-head h2 {
    flex: 1;
    padding-top: 6px;
    font-size: 19px;
    line-height: 26px;
    white-space: nowrap;
    color: #217346;
}

.pane-close {
    margin: 0 4px 0 31px;
}

.pane-intro {
    display: flex;
    justify-content: space-between;
    align-items: flex-start;
    height: 47px;
    padding-top: 4px;
}

.pane-intro p {
    font-size: 11px;
    line-height: 14px;
    white-space: nowrap;
}

.gear {
    flex: none;
    width: 44px;
    height: 27px;
    gap: 9px;
    background-color: #fdfdfd;
    border: 1px solid #ababab;
}

.search {
    display: flex;
    align-items: center;
    height: 20px;
    padding: 0 2px;
    background-color: #fff;
    border: 1px solid #ababab;
}

.search input {
    flex: 1;
    min-width: 0;
}

.search input::placeholder {
    color: #666;
}

.field-list {
    display: flex;
    justify-content: space-between;
    height: 119px;
    margin-top: 18px;
    overflow: hidden;
    background-color: #fdfdfd;
}

.fields {
    margin-top: -4px;
    padding-left: 2px;
}

.fields label, .pane-foot label {
    display: flex;
    align-items: center;
    gap: 6px;
    height: 19px;
}

.on {
    font-weight: bold;
}

input[type="checkbox"] {
    appearance: none;
    display: grid;
    place-items: center;
    width: 13px;
    height: 13px;
    background-color: #fff;
    border: 1px solid #777;
}

input[type="checkbox"]:checked::before {
    content: "";
    width: 8px;
    height: 4px;
    margin-bottom: 3px;
    border-left: 2px solid #666;
    border-bottom: 2px solid #666;
    transform: rotate(-48deg);
}

.list-scroll {
    margin: 2px 1px;
    background-color: #f1f1f1;
}

.list-scroll .track {
    padding-top: 20px;
}

.list-scroll .thumb {
    height: 56px;
}

.drag-hint {
    margin: 16px -5px 0 2px;
    padding-top: 4px;
    font-size: 11px;
    border-top: 1px dotted #b5b5b5;
    white-space: nowrap;
}

.areas {
    display: grid;
    grid-template-columns: 121px 1fr;
    margin: 16px 0 0 3px;
}

.area {
    padding: 0 6px 6px 0;
    border-right: 1px solid #b5b5b5;
    border-bottom: 1px solid #b5b5b5;
}

.area:nth-child(even) {
    padding: 0 0 6px 2px;
    border-right: none;
}

.area:nth-child(n+3) {
    padding-top: 6px;
    padding-bottom: 0;
    border-bottom: none;
}

.area h3 {
    display: flex;
    align-items: center;
    gap: 8px;
    height: 21px;
    padding: 0 0 4px 4px;
    font-size: 12px;
}

.drop {
    display: flex;
    height: 43px;
    padding: 2px 1px 0;
    overflow: hidden;
    background-color: #fdfdfd;
}

.pills {
    display: flex;
    flex-direction: column;
    gap: 2px;
    flex: 1;
}

.pill {
    flex: none;
    width: 100%;
    height: 21px;
    gap: 6px;
    justify-content: flex-start;
    padding: 0 8px 0 6px;
    background-color: #fff;
    border: 1px solid #ababab;
}

.pill .caret {
    margin-left: auto;
}

.drop-scroll {
    height: 39px;
    margin: 0 0 0 3px;
}

.drop-scroll .thumb {
    height: 9px;
}

.pane-foot {
    display: flex;
    align-items: center;
    justify-content: space-between;
    margin: 20px 0 0 3px;
}

.pane-foot label {
    font-size: 11px;
}

.update {
    width: 34px;
    height: 22px;
    color: #aaa;
    background-color: #fdfdfd;
    border: 1px solid #dadada;
}

/* Status bar */
.status {
    display: flex;
    align-items: center;
    flex: none;
    height: 22px;
    padding: 0 8px 0 7px;
    background-color: #f1f1f1;
    border-top: 1px solid #c6c6c6;
}

.macro {
    margin-left: 20px;
}

.views {
    display: flex;
    margin-left: auto;
}

.view {
    width: 38px;
    height: 21px;
}

.zoom {
    display: flex;
    align-items: center;
    margin-left: 7px;
}

.zoom input {
    appearance: none;
    width: 101px;
    height: 11px;
    margin: 0 4px 0 0;
    background: linear-gradient(#999, #999) center / 100% 1px no-repeat;
}

.zoom input::-webkit-slider-thumb {
    appearance: none;
    width: 4px;
    height: 11px;
    background-color: #555;
}

.zoom span {
    width: 49px;
    text-align: right;
}
```
